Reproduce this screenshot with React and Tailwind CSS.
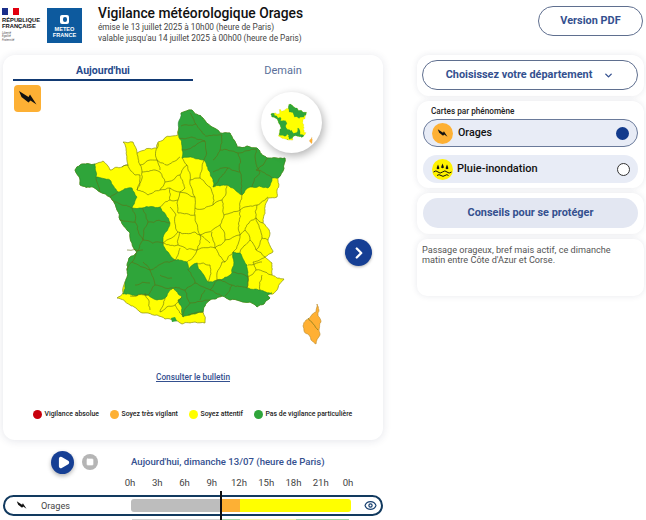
import { ChevronDown, ChevronRight, Eye, Play, Square } from 'lucide-react';

const font = { fontFamily: 'Roboto, sans-serif' };

const hash = (x, y) => {
  const s = Math.sin(x * 12.9898 + y * 78.233) * 43758.5453;
  return s - Math.floor(s) - 0.5;
};

// midpoint displacement so that the hand traced borders look like real ones.
// the offset only depends on the midpoint, so shared borders stay shared
function wiggle(a, b, out) {
  const len = Math.hypot(b[0] - a[0], b[1] - a[1]);
  if (len < 3) {
    out.push(b);
    return;
  }
  const flip = a[0] > b[0] || (a[0] === b[0] && a[1] > b[1]) ? -1 : 1;
  const mx = (a[0] + b[0]) / 2;
  const my = (a[1] + b[1]) / 2;
  const off = hash(mx, my) * 0.24 * flip;
  const m = [mx - (b[1] - a[1]) * off, my + (b[0] - a[0]) * off];
  wiggle(a, m, out);
  wiggle(m, b, out);
}

function rough(d) {
  let res = '';
  let last = null;
  let first = null;
  for (const cmd of d.match(/[MLZ][^MLZ]*/g)) {
    const t = cmd[0];
    if (t === 'M') {
      last = cmd.slice(1).trim().split(/\s+/).map(Number);
      first = last;
      res += `M${last[0]} ${last[1]}`;
      continue;
    }
    const next = t === 'Z' ? first : cmd.slice(1).trim().split(/\s+/).map(Number);
    const pts = [];
    wiggle(last, next, pts);
    pts.forEach((p) => {
      res += `L${p[0].toFixed(1)} ${p[1].toFixed(1)}`;
    });
    last = next;
  }
  return res;
}

const FRANCE = rough('M192 110L203 118L212 127L220 133L230 133L237 147L247 146L257 148L267 158L285 158L278 178L277 190L277 197L268 198L265 210L263 223L270 233L268 240L273 252L265 257L272 263L272 275L284 279L278 288L273 294L267 295L270 298L264 304L257 307L250 302L240 301L230 300L222 296L210 300L205 306L203 312L205 323L195 322L182 324L173 320L165 319L157 315L148 313L140 312L130 305L117 298L123 293L125 282L127 270L129 258L137 252L132 243L130 233L120 220L117 210L110 197L100 192L93 187L80 185L75 170L80 165L95 164L103 161L110 170L122 167L128 165L123 142L133 142L137 153L157 148L158 142L178 135L181 113Z');
const GREEN_N = rough('M181 113L192 110L203 118L212 127L220 133L230 133L237 147L247 146L257 148L267 158L285 158L278 178L272 178L268 188L250 187L242 195L227 185L213 187L210 172L204 160L182 158L182 150L178 133Z');
const GREEN_W = rough('M80 165L95 164L96 177L110 180L118 192L132 188L137 197L132 208L142 208L160 207L170 223L163 243L175 260L187 262L188 270L197 263L208 282L217 280L232 273L233 252L240 253L247 265L248 277L247 288L260 290L272 293L267 295L270 298L264 304L257 307L250 302L240 301L230 300L222 296L210 300L205 306L203 312L190 315L183 317L178 300L182 297L173 288L165 298L157 300L148 295L123 294L125 282L127 270L129 258L137 252L132 243L130 233L120 220L117 210L110 197L100 192L93 187L80 185L75 170Z');
const CORSE = rough('M317 304L319 310L318 316L321 322L320 335L316 344L311 340L309 335L304 331L303 326L306 320L311 316L316 312Z');
const LINES = rough('M190 113L196 124M181 126L196 124L205 135M179 139L192 137L205 141L204 160M182 150L195 146L205 141M205 136L222 135L220 150L213 160M220 150L238 153L240 172L242 195M213 172L228 168L240 172M238 153L256 149L260 172L252 187M268 158L256 170L272 178M213 187L228 168M137 153L140 165L157 160L168 165L180 157M158 143L157 160L160 170M122 167L128 165L135 175L140 175L137 190M140 165L142 172L137 190M142 172L155 170L160 172L165 182L160 190L148 195L137 190M160 190L170 188L170 200L160 207M165 182L180 175L187 165L182 158M170 188L180 192L178 200L170 200M180 175L185 188L180 192M187 165L190 180L200 178L204 160M190 180L195 197L180 192M200 178L210 187L213 205M195 197L195 208L213 205L222 200L227 185M222 200L224 215L240 210L242 195M240 210L257 205L268 197M178 200L178 213L195 215L195 208M170 207L176 215L178 232L163 243M195 215L200 235L220 225L224 215M178 232L195 232L200 235M220 225L225 240L240 235L240 210M240 235L256 218L263 223M257 205L256 218M200 235L197 250L215 248L225 240M215 248L225 262L233 252L240 235M240 253L250 240L256 250L265 257M250 240L245 230M256 218L262 238L268 240M197 250L187 262M163 243L178 245L197 250M175 260L180 248M248 277L256 270L265 272L272 275M256 270L253 262L265 257M248 265L262 262M217 280L222 262L225 262M208 282L210 265L197 263M260 290L262 275M233 272L248 277L247 288L232 285L225 296M232 285L217 280L210 290L222 296M210 290L195 283L188 270M195 283L185 290L173 288M185 290L190 303L210 300M190 303L183 317M188 315L203 312M173 288L155 285L148 295M155 285L150 270L163 263L175 260M150 270L132 262L127 270M132 262L143 240L163 243M143 240L135 222L120 220M142 208L148 222L143 240M148 222L170 223M132 208L135 222M96 177L100 192M118 192L110 197L132 208M145 293L150 310M165 298L160 312L175 305L182 297M175 305L182 315M148 295L130 296M308 318L318 330M256 250L262 238M215 248L212 232M178 245L180 232M200 235L210 243M127 250L143 250M143 262L150 270M160 275L172 278M135 285L150 283M205 290L200 300');

function MapShapes({ lines }) {
  return (
    <>
      <path d={FRANCE} fill="#ffff00" stroke="#8a8f10" strokeWidth="0.7" />
      <path d={GREEN_N} fill="#2fa53a" stroke="#24852f" strokeWidth="0.6" />
      <path d={GREEN_W} fill="#2fa53a" stroke="#24852f" strokeWidth="0.6" />
      <path d="M171 318L175 317L177 321L172 322Z" fill="#2fa53a" />
      <path d={CORSE} fill="#ffb033" stroke="#b88a2c" strokeWidth="0.6" />
      {lines && <path d={LINES} fill="none" stroke="#5f6d14" strokeWidth="0.6" strokeLinejoin="round" />}
    </>
  );
}

function Bolt({ className }) {
  return (
    <svg viewBox="0 0 27 27" className={className}>
      <path d="M5 6L14.5 12L16 9.5L22.5 19.5L16.5 15.5L14.5 17.5L7.5 12Z" fill="#111" />
    </svg>
  );
}

function RainIcon() {
  return (
    <svg viewBox="0 0 21 21" className="w-[21px] h-[21px] shrink-0">
      <circle cx="10.5" cy="10.5" r="10.5" fill="#fff200" />
      <path d="M6 5.5L7.2 8.4A1.3 1.3 0 1 1 4.8 8.4ZM10.5 4.5L11.7 7.4A1.3 1.3 0 1 1 9.3 7.4ZM15 5.5L16.2 8.4A1.3 1.3 0 1 1 13.8 8.4Z" fill="#111" />
      <path d="M1.5 13Q4 10.8 6 13T10.5 13T15 13T19.5 13M5 16.5Q7 14.8 9 16.5T13 16.5T16.5 16.5" fill="none" stroke="#111" strokeWidth="1" />
    </svg>
  );
}

function LegendItem({ color, label, className }) {
  return (
    <div className={`flex items-center ${className}`}>
      <span className={`w-[9px] h-[9px] rounded-full ${color}`} />
      <span className="ml-[2.5px] text-[6.9px] leading-none font-medium text-[#222] whitespace-nowrap">{label}</span>
    </div>
  );
}

const HOURS = ['0h', '3h', '6h', '9h', '12h', '15h', '18h', '21h', '0h'];

export default function App() {
  return (
    <div className="relative w-[646px] h-[520px] overflow-hidden bg-white" style={font}>
      {/* header */}
      <div className="flex items-start h-[55px]">
        <div className="w-[40px] ml-[2px] mt-[8px] shrink-0">
          <div className="flex w-[17px] h-[7px]">
            <span className="flex-1 bg-[#1b2f8a]" />
            <span className="flex-1 bg-white" />
            <span className="flex-1 bg-[#e1000f]" />
          </div>
          <div className="mt-[2px] text-[5.8px] leading-[6px] font-bold text-[#111]" style={{ fontFamily: '"Liberation Sans", sans-serif' }}>
            RÉPUBLIQUE<br />FRANÇAISE
          </div>
          <div className="mt-[3px] text-[3px] leading-[3.3px] italic text-[#555]">
            Liberté<br />Égalité<br />Fraternité
          </div>
        </div>
        <div className="ml-[5px] mt-[8px] w-[35px] h-[35px] bg-[#0d5a9e] flex flex-col items-center shrink-0">
          <span className="mt-[7px] w-[9px] h-[9px] bg-white rounded-[2px] flex items-center justify-center">
            <span className="w-[4px] h-[5px] rounded-full bg-[#0d5a9e]" />
          </span>
          <span className="mt-[2px] text-[5.6px] leading-[6px] font-bold text-white text-center" style={{ fontFamily: '"Liberation Sans", sans-serif' }}>
            METEO<br />FRANCE
          </span>
        </div>
        <div className="ml-[16px] mt-[5px] w-[300px]">
          <h1 className="text-[13.8px] leading-[17px] font-medium text-[#111] whitespace-nowrap">Vigilance météorologique Orages</h1>
          <p className="text-[8.25px] leading-[11px] text-[#444] whitespace-nowrap">émise le 13 juillet 2025 à 10h00 (heure de Paris)</p>
          <p className="text-[8.25px] leading-[11px] text-[#444] whitespace-nowrap">valable jusqu'au 14 juillet 2025 à 00h00 (heure de Paris)</p>
        </div>
        <button className="ml-auto mr-[3px] mt-[6px] w-[105px] h-[30px] rounded-full border border-[#5f6f8f] text-[10.9px] font-bold text-[#34508f]">
          Version PDF
        </button>
      </div>

      <div className="flex items-start">
        {/* left card */}
        <div className="relative ml-[3px] w-[380px] h-[385px] rounded-[12px] bg-white shadow-[0_1px_8px_rgba(30,40,80,0.12)] shrink-0">
          <div className="flex px-[10px] pt-[8px]">
            <div className="w-[180px] h-[18px] border-b-2 border-[#123a73] text-center text-[10.6px] leading-[15px] font-bold text-[#274a8c]">Aujourd'hui</div>
            <div className="w-[180px] h-[18px] text-center text-[11px] leading-[15px] font-normal text-[#5a6f9a]">Demain</div>
          </div>
          <div className="ml-[11px] mt-[4px] w-[27px] h-[27px] rounded-[4px] bg-[#fdb034]">
            <Bolt className="w-[27px] h-[27px]" />
          </div>
          <svg viewBox="70 105 260 245" className="absolute left-[67px] top-[50px] w-[260px] h-[245px]">
            <MapShapes lines />
          </svg>
          <div className="absolute left-[258px] top-[37px] w-[61px] h-[61px] rounded-full bg-white shadow-[2px_3px_8px_rgba(0,0,0,0.3)]">
            <svg viewBox="70 105 260 245" className="absolute left-[1px] top-[11px] w-[44px] h-[42px] ml-[8px]">
              <MapShapes />
            </svg>
          </div>
          <button className="absolute left-[342px] top-[184px] w-[27px] h-[27px] rounded-full bg-[#163f94] flex items-center justify-center shadow-[0_1px_3px_rgba(0,0,0,0.3)]">
            <ChevronRight className="w-[18px] h-[18px] text-white" strokeWidth={3} />
          </button>
          <a className="absolute left-0 right-0 top-[317px] text-center text-[8.3px] leading-[10px] font-medium text-[#34508f] underline">Consulter le bulletin</a>
          <div className="absolute left-[30px] top-[355px] flex">
            <LegendItem color="bg-[#c8000c]" label="Vigilance absolue" className="w-[77px]" />
            <LegendItem color="bg-[#fdb034]" label="Soyez très vigilant" className="w-[79px]" />
            <LegendItem color="bg-[#ffff00]" label="Soyez attentif" className="w-[65px]" />
            <LegendItem color="bg-[#2fa53a]" label="Pas de vigilance particulière" />
          </div>
        </div>

        {/* right column */}
        <div className="ml-[34px] w-[227px] flex flex-col gap-[5px] shrink-0">
          <div className="h-[41px] rounded-[12px] bg-white shadow-[0_0_6px_rgba(30,40,80,0.1)] px-[5px] pt-[5px]">
            <button className="w-[216px] h-[30px] rounded-full border border-[#5f6f8f] flex items-center justify-center gap-[11px] text-[10.9px] font-bold text-[#34508f]">
              Choisissez votre département
              <ChevronDown className="w-[11px] h-[11px] text-[#34508f]" strokeWidth={3} />
            </button>
          </div>
          <div className="h-[87px] rounded-[12px] bg-white shadow-[0_0_6px_rgba(30,40,80,0.1)] px-[6px] pt-[5px]">
            <div className="ml-[8px] text-[8.2px] leading-[11px] font-medium text-[#222]">Cartes par phénomène</div>
            <div className="mt-[2px] w-[215px] h-[28px] rounded-full bg-[#e8ecf6] border border-[#6a7a9a] flex items-center pl-[8px] pr-[8px]">
              <span className="w-[21px] h-[21px] rounded-full bg-[#fdb034] shrink-0 flex items-center justify-center">
                <Bolt className="w-[15px] h-[15px]" />
              </span>
              <span className="ml-[5px] text-[10.7px] font-medium text-[#111]">Orages</span>
              <span className="ml-auto w-[13px] h-[13px] rounded-full bg-[#123a8c]" />
            </div>
            <div className="mt-[8px] w-[215px] h-[28px] rounded-full bg-[#e8ecf6] flex items-center pl-[9px] pr-[8px]">
              <RainIcon />
              <span className="ml-[4px] text-[11px] font-medium text-[#111]">Pluie-inondation</span>
              <span className="ml-auto w-[13px] h-[13px] rounded-full border border-[#333] bg-white" />
            </div>
          </div>
          <div className="h-[41px] rounded-[12px] bg-white shadow-[0_0_6px_rgba(30,40,80,0.1)] px-[6px] pt-[5px]">
            <button className="w-[215px] h-[30px] rounded-full bg-[#e3e7f2] text-[10.9px] font-bold text-[#34508f]">Conseils pour se protéger</button>
          </div>
          <div className="h-[57px] rounded-[10px] bg-white shadow-[0_0_6px_rgba(30,40,80,0.1)] pl-[5px] pr-[25px] pt-[6px] text-[9.15px] leading-[10px] text-[#555]">
            Passage orageux, bref mais actif, ce dimanche matin entre Côte d'Azur et Corse.
          </div>
        </div>
      </div>

      {/* timeline */}
      <div className="flex items-center mt-[10px] h-[24px]">
        <button className="ml-[51px] w-[23px] h-[23px] rounded-full bg-[#163f94] flex items-center justify-center shadow-[0_2px_4px_rgba(0,0,0,0.3)]">
          <Play className="w-[13px] h-[13px] text-white ml-[1px]" fill="white" strokeWidth={3} />
        </button>
        <button className="ml-[8px] w-[16px] h-[16px] rounded-full bg-[#b5b5b5] flex items-center justify-center">
          <Square className="w-[8px] h-[8px] text-white" fill="white" />
        </button>
        <div className="ml-[33px] text-[9.6px] font-medium text-[#34508f] whitespace-nowrap">Aujourd'hui, dimanche 13/07 (heure de Paris)</div>
      </div>
      <div className="flex pl-[116.4px] mt-[3px] h-[13px]">
        {HOURS.map((h, i) => (
          <span key={i} className="w-[27.25px] text-center text-[9.6px] leading-[12px] text-[#444]">{h}</span>
        ))}
      </div>
      <div className="ml-[3px] mt-[5px] w-[380px] h-[21px] rounded-full border-2 border-[#123a5f] flex items-center">
        <Bolt className="ml-[8.5px] w-[15px] h-[15px] shrink-0" />
        <span className="ml-[12.5px] w-[89.5px] text-[9.2px] text-[#444]">Orages</span>
        <div className="flex w-[220.5px] h-[13.5px] rounded-[3px] overflow-hidden">
          <span className="w-[91px] bg-[#bdbdbd]" />
          <span className="w-[18.5px] bg-[#fdb034]" />
          <span className="flex-1 bg-[#ffff00]" />
        </div>
        <Eye className="ml-[13px] w-[13px] h-[13px] text-[#163f6f]" strokeWidth={2.2} />
      </div>
      <div className="flex ml-[132px] mt-[3px] w-[217px] h-[3px]">
        <span className="w-[90px] bg-[#cfcfcf]" />
        <span className="w-[18px] bg-[#a3d6a6]" />
        <span className="w-[56px] bg-[#f5f0a8]" />
        <span className="flex-1 bg-[#a3d6a6]" />
      </div>
      <div className="absolute left-[220px] top-[491px] w-[2px] h-[29px] bg-[#111]" />
    </div>
  );
}
